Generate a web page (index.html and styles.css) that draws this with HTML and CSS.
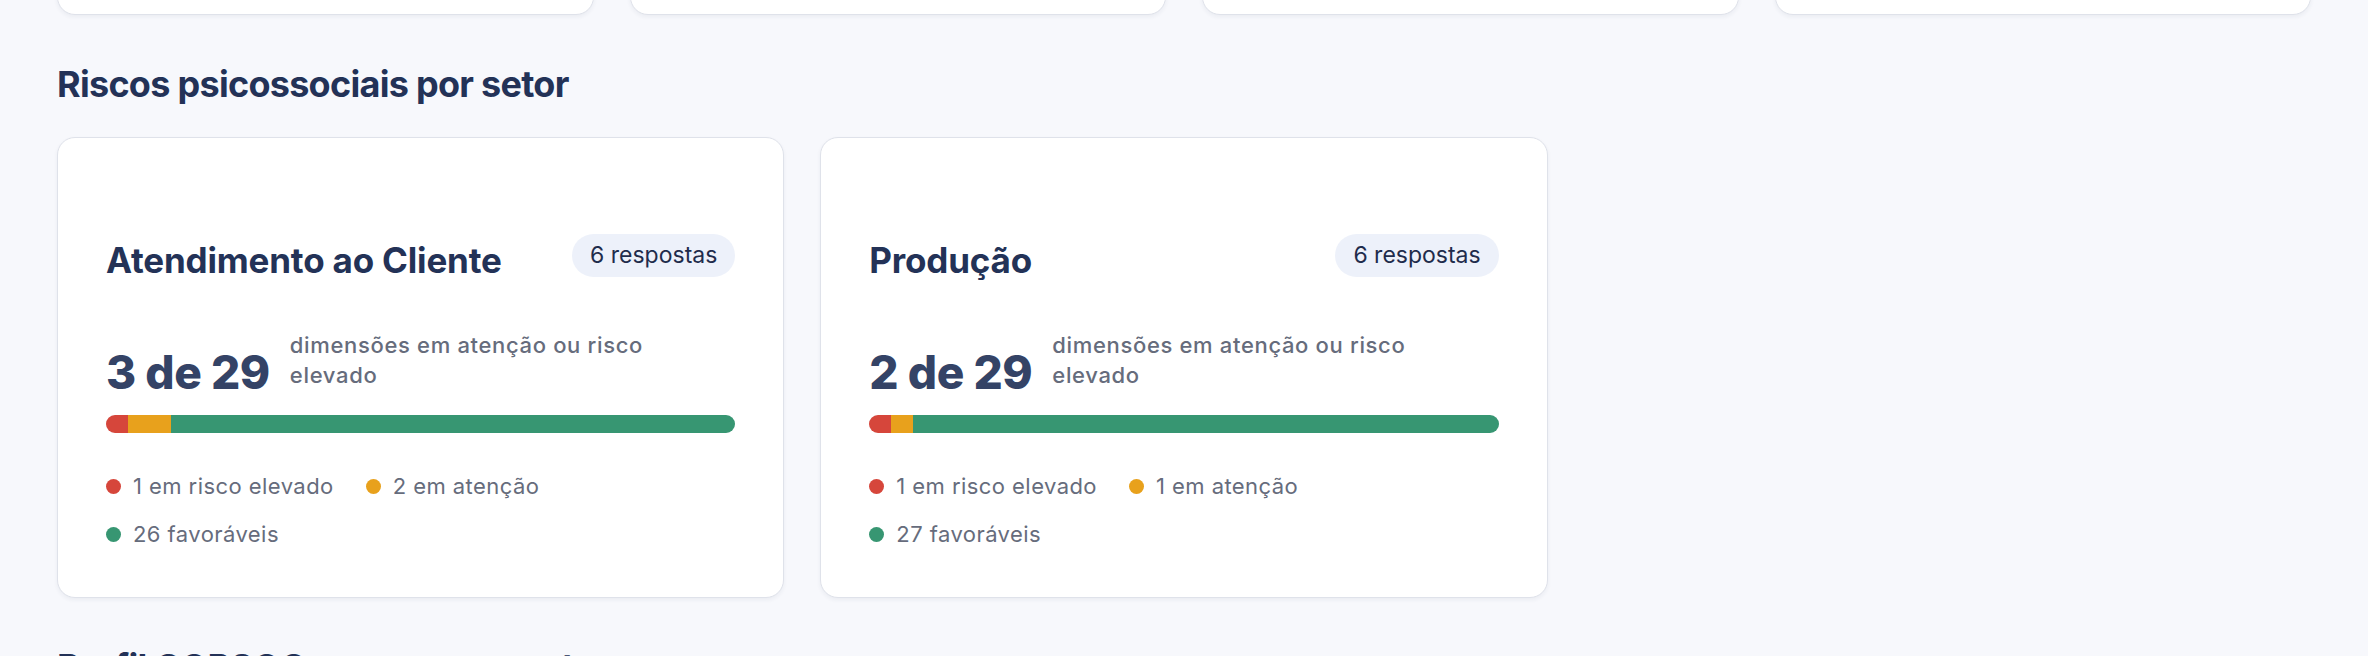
FILE: index.html
```html
<!DOCTYPE html>
<html lang="pt-BR">
<head>
    <meta charset="UTF-8">
    <meta name="viewport" content="width=device-width, initial-scale=1.0">
    <title>Painel COPSOQ | Riscos por setor</title>
    <link rel="stylesheet" href="styles.css">
</head>
<body>
    <main class="page">
        <!-- cards de resumo (parte de cima do painel) -->
        <div class="summary-grid">
            <div class="summary-card"></div>
            <div class="summary-card"></div>
            <div class="summary-card"></div>
            <div class="summary-card"></div>
        </div>

        <!-- riscos por setor -->
        <section class="section">
            <h2 class="section-title">Riscos psicossociais por setor</h2>
            <div class="sector-grid">
                <article class="sector-card">
                    <div class="sector-head">
                        <h3 class="sector-name">Atendimento ao Cliente</h3>
                        <span class="badge">6 respostas</span>
                    </div>
                    <div class="sector-score">
                        <strong class="score-value">3 de 29</strong>
                        <span class="score-label">dimensões em atenção ou risco elevado</span>
                    </div>
                    <div class="risk-bar">
                        <span class="seg seg-high" style="width: 3.45%"></span>
                        <span class="seg seg-warn" style="width: 6.9%"></span>
                        <span class="seg seg-ok" style="width: 89.65%"></span>
                    </div>
                    <ul class="legend">
                        <li><i class="dot dot-high"></i>1 em risco elevado</li>
                        <li><i class="dot dot-warn"></i>2 em atenção</li>
                        <li><i class="dot dot-ok"></i>26 favoráveis</li>
                    </ul>
                </article>

                <article class="sector-card">
                    <div class="sector-head">
                        <h3 class="sector-name">Produção</h3>
                        <span class="badge">6 respostas</span>
                    </div>
                    <div class="sector-score">
                        <strong class="score-value">2 de 29</strong>
                        <span class="score-label">dimensões em atenção ou risco elevado</span>
                    </div>
                    <div class="risk-bar">
                        <span class="seg seg-high" style="width: 3.45%"></span>
                        <span class="seg seg-warn" style="width: 3.45%"></span>
                        <span class="seg seg-ok" style="width: 93.1%"></span>
                    </div>
                    <ul class="legend">
                        <li><i class="dot dot-high"></i>1 em risco elevado</li>
                        <li><i class="dot dot-warn"></i>1 em atenção</li>
                        <li><i class="dot dot-ok"></i>27 favoráveis</li>
                    </ul>
                </article>
            </div>
        </section>

        <section class="section">
            <h2 class="section-title">Perfil COPSOQ por componente</h2>
        </section>
    </main>
</body>
</html>
```

FILE: styles.css
```css
* {
    margin: 0;
    padding: 0;
    box-sizing: border-box;
}

body {
    background: #f7f8fc;
    font-family: Inter, "Noto Sans", sans-serif;
    color: #233257;
    overflow: hidden;
}

.page {
    padding: 0 57px;
}

/* cards de resumo */
.summary-grid {
    display: grid;
    grid-template-columns: repeat(4, 1fr);
    gap: 36px;
    margin-top: -185px;
}

.summary-card {
    height: 200px;
    background: #fff;
    border: 1.5px solid #dfe2ea;
    border-radius: 18px;
    box-shadow: 0 2px 4px rgba(30, 45, 80, 0.06);
}

/* titulos de secao */
.section-title {
    margin: 46px 0 29px;
    font-size: 36px;
    line-height: 47px;
    font-weight: 700;
    letter-spacing: -0.02em;
    color: #233257;
}

/* grade dos setores */
.sector-grid {
    display: grid;
    grid-template-columns: repeat(3, 1fr);
    gap: 36px;
}

.sector-card {
    background: #fff;
    border: 1.5px solid #dfe2ea;
    border-radius: 18px;
    padding: 96px 48px 48px;
    box-shadow: 0 2px 4px rgba(30, 45, 80, 0.06);
}

.sector-head {
    display: flex;
    justify-content: space-between;
    align-items: flex-start;
    gap: 24px;
}

.sector-name {
    font-size: 35px;
    line-height: 52px;
    font-weight: 700;
    letter-spacing: -0.005em;
    color: #233257;
}

.badge {
    padding: 8px 18px;
    font-size: 23px;
    line-height: 27px;
    border-radius: 999px;
    background: #edf1fa;
    color: #1f2c4c;
    white-space: nowrap;
}

.sector-score {
    display: flex;
    align-items: flex-end;
    gap: 20px;
    margin-top: 44px;
}

.score-value {
    font-size: 46px;
    line-height: 45px;
    font-weight: 800;
    letter-spacing: -0.01em;
    color: #344366;
    white-space: nowrap;
}

.score-label {
    max-width: 372px;
    padding-bottom: 5px;
    font-size: 22px;
    line-height: 30px;
    font-weight: 500;
    letter-spacing: 0.03em;
    color: #666c7c;
}

/* barra de risco */
.risk-bar {
    display: flex;
    height: 18px;
    margin-top: 20px;
    border-radius: 9px;
    overflow: hidden;
    background: #eef0f5;
}

.seg {
    height: 100%;
}

.seg-high { background: #d6463b; }
.seg-warn { background: #e8a11c; }
.seg-ok { background: #379672; }

/* legenda */
.legend {
    display: flex;
    flex-wrap: wrap;
    gap: 18px 32px;
    margin-top: 38px;
    list-style: none;
}

.legend li {
    display: flex;
    align-items: center;
    gap: 12px;
    font-size: 22px;
    line-height: 30px;
    letter-spacing: 0.02em;
    color: #666c7c;
}

.dot {
    width: 15px;
    height: 15px;
    border-radius: 50%;
}

.dot-high { background: #d6463b; }
.dot-warn { background: #e8a11c; }
.dot-ok { background: #379672; }
```
